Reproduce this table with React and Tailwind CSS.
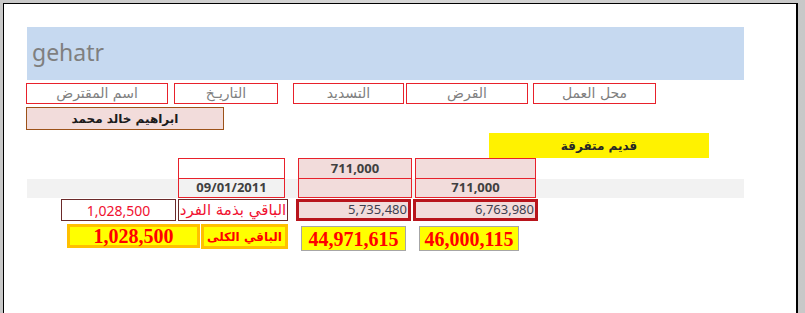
import React from 'react';

const ar = "font-['DejaVu_Sans',sans-serif]";
const num = "font-['Noto_Sans',sans-serif]";
const big = "font-['Liberation_Serif',serif] font-bold text-[20px] text-[#ff0000]";

const labels = [
  { text: 'اسم المقترض', cls: 'ml-[22px] w-[142px]' },
  { text: 'التاريـخ', cls: 'ml-[6px] w-[104px]' },
  { text: 'التسديد', cls: 'ml-[15px] w-[111px]' },
  { text: 'القرض', cls: 'ml-[2px] w-[122px]' },
  { text: 'محل العمل', cls: 'ml-[5px] w-[123px]' },
];

export default function App() {
  return (
    <div className="w-[805px] h-[313px] overflow-hidden bg-gradient-to-r from-[#c8c8c8] via-[#d6d6d6] to-[#c8c8c8] pt-[3px] pl-[3px]">
      <div className="w-[795px] h-[320px] bg-white border-l border-t border-r-2 border-black">
        {/* title bar */}
        <div className="ml-[23px] mt-[23px] w-[717px] h-[53px] bg-[#c6d9f0] flex items-center pl-[5px]">
          <span className={`${num} text-[23px] text-[#7f7f7f] leading-none -mt-[3px]`}>gehatr</span>
        </div>

        {/* header labels */}
        <div className="flex mt-[3px]">
          {labels.map((l, i) => (
            <div key={i} className={`${l.cls} h-[21px] border border-[#e8212b] flex items-center justify-center ${ar} text-[14px] text-[#7f7f7f]`} dir="rtl">
              {l.text}
            </div>
          ))}
        </div>

        {/* borrower */}
        <div className="flex mt-[3px]">
          <div className={`ml-[22px] w-[198px] h-[23px] bg-[#f2dcdb] border border-[#9c5219] flex items-center justify-center ${ar} font-bold text-[12px] text-[#1a1a1a]`} dir="rtl">
            ابراهيم خالد محمد
          </div>
        </div>

        {/* category */}
        <div className="flex mt-[3px]">
          <div className={`ml-[485px] w-[220px] h-[25px] bg-[#fff200] flex items-center justify-center ${ar} font-bold text-[12px] text-[#262626]`} dir="rtl">
            قديم متفرقة
          </div>
        </div>

        {/* row A */}
        <div className="flex">
          <div className="ml-[174px] w-[107px] h-[21px] border border-[#e8212b]" />
          <div className={`ml-[13px] w-[114px] h-[21px] border border-[#e8212b] bg-[#f2dcdb] flex items-center justify-center ${num} font-bold text-[13px] text-[#404040]`}>711,000</div>
          <div className="ml-[3px] w-[121px] h-[21px] border border-[#e8212b] bg-[#f2dcdb]" />
        </div>

        {/* row B */}
        <div className="flex ml-[23px] w-[717px] h-[19px] bg-[#f2f2f2]">
          <div className={`ml-[151px] w-[107px] h-[19px] border-x border-b border-[#e8212b] flex items-center justify-center ${num} font-bold text-[13px] text-[#404040]`}>09/01/2011</div>
          <div className="ml-[13px] w-[114px] h-[19px] border-x border-b border-[#e8212b] bg-[#f2dcdb]" />
          <div className={`ml-[3px] w-[121px] h-[19px] border-x border-b border-[#e8212b] bg-[#f2dcdb] flex items-center justify-center ${num} font-bold text-[13px] text-[#404040]`}>711,000</div>
        </div>

        {/* row C */}
        <div className="flex mt-px">
          <div className={`ml-[57px] w-[115px] h-[22px] border border-[#6b2a2a] flex items-center justify-center ${num} text-[14px] text-[#f01030]`}>1,028,500</div>
          <div className={`ml-[2px] w-[110px] h-[22px] border border-[#6b2a2a] flex items-center justify-center ${ar} text-[15px] text-[#f01030]`} dir="rtl">
            الباقي بذمة الفرد
          </div>
          <div className={`ml-[8px] w-[115px] h-[22px] border-[3px] border-[#b8141c] bg-[#f2dcdb] flex items-center justify-end pr-[1px] ${num} text-[13px] text-[#3f3f4f]`}>5,735,480</div>
          <div className={`ml-[2px] w-[125px] h-[22px] border-[3px] border-[#b8141c] bg-[#f2dcdb] flex items-center justify-end pr-[1px] ${num} text-[13px] text-[#3f3f4f]`}>6,763,980</div>
        </div>

        {/* row D */}
        <div className="flex items-start mt-[3px]">
          <div className={`ml-[63px] w-[133px] h-[24px] border-[3px] border-[#ffc000] bg-[#ffff00] flex items-center justify-center ${big} leading-none`}>1,028,500</div>
          <div className={`ml-[1px] w-[87px] h-[25px] border-[3px] border-[#ffc000] bg-[#ffff00] flex items-center justify-center ${ar} font-bold text-[12px] text-[#ff0000]`} dir="rtl">
            الباقي الكلى
          </div>
          <div className={`ml-[13px] mt-[2px] w-[105px] h-[25px] border border-[#a6a6a6] bg-[#ffff00] flex items-center justify-center ${big} leading-none`}>44,971,615</div>
          <div className={`ml-[13px] mt-[2px] w-[100px] h-[25px] border border-[#a6a6a6] bg-[#ffff00] flex items-center justify-center ${big} leading-none`}>46,000,115</div>
        </div>
      </div>
    </div>
  );
}
